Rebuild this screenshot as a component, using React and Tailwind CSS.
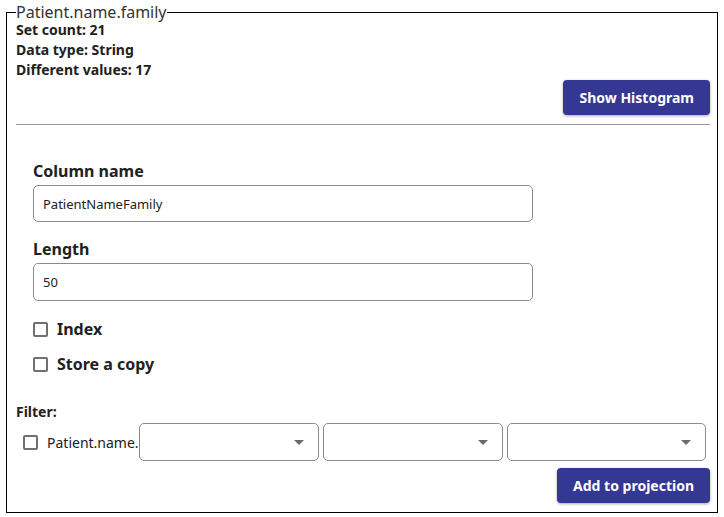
import { useState } from "react";

const FONT = { fontFamily: '"Noto Sans", "Open Sans", sans-serif' };

function Caret() {
  return (
    <svg width="10" height="5" viewBox="0 0 10 5" className="shrink-0">
      <path d="M0 0 L10 0 L5 5 Z" fill="#6b6b6b" />
    </svg>
  );
}

function Box({ checked, onChange }) {
  return (
    <button
      type="button"
      onClick={onChange}
      className="flex h-[15px] w-[15px] shrink-0 items-center justify-center rounded-[2px] border-2 border-[#707070] bg-white"
    >
      {checked && <span className="h-[7px] w-[7px] bg-[#707070]" />}
    </button>
  );
}

function Dropdown({ width }) {
  return (
    <div
      className={`flex h-[38px] items-center justify-end rounded-[5px] border border-[#8c8c8c] bg-white pr-[14px] ${width}`}
    >
      <Caret />
    </div>
  );
}

export default function App() {
  const [name, setName] = useState("PatientNameFamily");
  const [length, setLength] = useState("50");
  const [index, setIndex] = useState(false);
  const [copy, setCopy] = useState(false);
  const [filter, setFilter] = useState(false);

  return (
    <div className="bg-white px-[6px] pt-[4px] text-[#212121]" style={FONT}>
      <fieldset className="h-[509px] border border-black pl-[9px] pr-[7px]">
        <legend className="text-[16px] leading-[16px] text-[#333]">Patient.name.family</legend>
        <div className="text-[14px] font-bold leading-5">
          <div>Set count: 21</div>
          <div>Data type: String</div>
          <div>Different values: 17</div>
        </div>
        <div className="flex justify-end">
          <button className="h-[35px] rounded-[4px] bg-[#343893] px-4 text-[14px] font-bold text-white shadow-[0_1px_3px_rgba(0,0,0,0.35)]">
            Show Histogram
          </button>
        </div>
        <div className="mt-[9px] border-t border-[#9a9a9a]" />

        <div className="pl-[17px] pt-[34px]">
          <label className="block text-[16px] font-bold leading-6">Column name</label>
          <input
            value={name}
            onChange={(e) => setName(e.target.value)}
            className="mt-[2px] h-[37px] w-[500px] rounded-[5px] border border-[#8c8c8c] px-[9px] text-[13px] outline-none"
          />
          <label className="mt-[15px] block text-[16px] font-bold leading-6">Length</label>
          <input
            value={length}
            onChange={(e) => setLength(e.target.value)}
            className="mt-[2px] h-[38px] w-[500px] rounded-[5px] border border-[#8c8c8c] px-[9px] text-[13px] outline-none"
          />
          <div className="mt-[16px] flex h-6 items-center gap-[9px] text-[16px] font-bold">
            <Box checked={index} onChange={() => setIndex(!index)} />
            <span>Index</span>
          </div>
          <div className="mt-[11px] flex h-6 items-center gap-[9px] text-[16px] font-bold">
            <Box checked={copy} onChange={() => setCopy(!copy)} />
            <span>Store a copy</span>
          </div>
        </div>

        <div className="mt-[26px] text-[14px] font-bold leading-5">Filter:</div>
        <div className="mt-[1px] flex items-center">
          <div className="ml-[7px]">
            <Box checked={filter} onChange={() => setFilter(!filter)} />
          </div>
          <span className="ml-[9px] text-[14px]">Patient.name.</span>
          <div className="flex gap-[4px]">
            <Dropdown width="w-[180px]" />
            <Dropdown width="w-[180px]" />
            <Dropdown width="w-[199px]" />
          </div>
        </div>
        <div className="mt-[7px] flex justify-end">
          <button className="h-[35px] rounded-[4px] bg-[#343893] px-4 text-[14px] font-bold text-white shadow-[0_1px_3px_rgba(0,0,0,0.35)]">
            Add to projection
          </button>
        </div>
      </fieldset>
    </div>
  );
}
